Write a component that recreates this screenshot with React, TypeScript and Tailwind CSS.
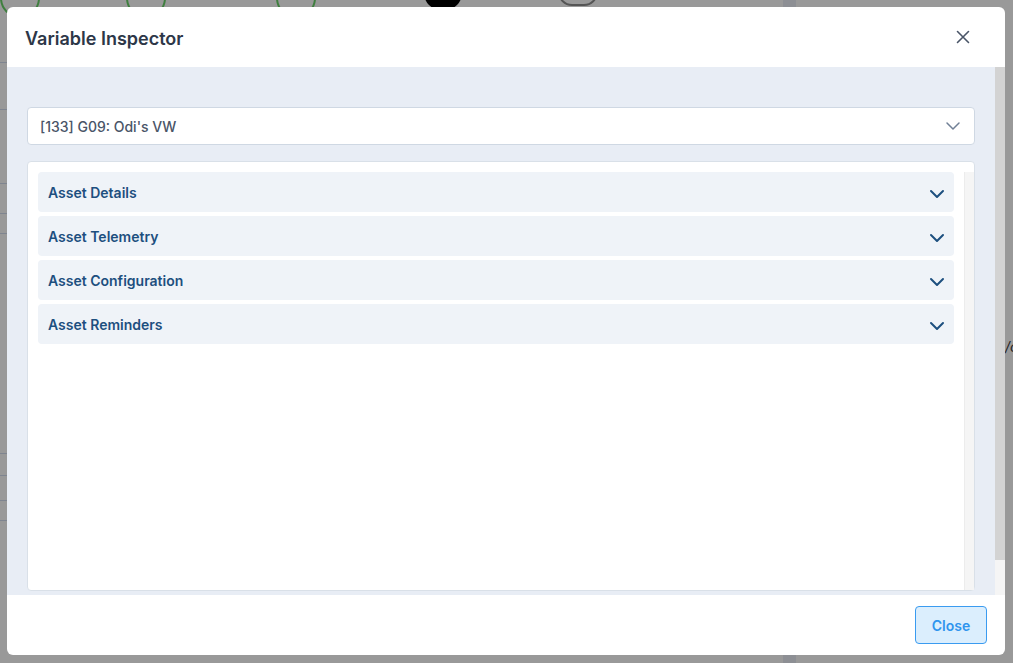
import { useState } from "react"

const sections = ["Asset Details", "Asset Telemetry", "Asset Configuration", "Asset Reminders"]

function Chevron({ className }: { className?: string }) {
  return (
    <svg viewBox="0 0 16 16" fill="none" stroke="currentColor" strokeLinecap="round" strokeLinejoin="round" className={className}>
      <path d="M2 5l6 6 6-6" />
    </svg>
  )
}

function App() {
  const [open, setOpen] = useState<string | null>(null)

  return (
    <div className="relative w-[1013px] h-[663px] overflow-hidden bg-[#999999] p-[7px] font-['Inter','Noto_Sans',sans-serif]">
      {/* page behind the overlay */}
      <div className="absolute left-[0px] top-[-22px] w-[40px] h-[40px] rounded-full border-2 border-[#3f7f3f]" />
      <div className="absolute left-[126px] top-[-22px] w-[40px] h-[40px] rounded-full border-2 border-[#3f7f3f]" />
      <div className="absolute left-[276px] top-[-22px] w-[40px] h-[40px] rounded-full border-2 border-[#3f7f3f]" />
      <div className="absolute left-[424px] top-[-24px] w-[38px] h-[34px] rounded-full bg-black" />
      <div className="absolute left-[558px] top-[-22px] w-[40px] h-[28px] rounded-full border-2 border-[#555]" />
      <div className="absolute left-[783px] top-0 w-[13px] h-[663px] bg-[#8d8f94]" />
      <div className="absolute left-0 top-[62px] w-[7px] border-t border-[#7f8590]" />
      <div className="absolute left-0 top-[109px] w-[7px] border-t border-[#7f8590]" />
      <div className="absolute left-0 top-[183px] w-[7px] border-t border-[#7f8590]" />
      <div className="absolute left-0 top-[213px] w-[7px] border-t border-[#7f8590]" />
      <div className="absolute left-0 top-[233px] w-[7px] border-t border-[#7f8590]" />
      <div className="absolute left-0 top-[453px] w-[7px] border-t border-[#7f8590]" />
      <div className="absolute left-0 top-[475px] w-[7px] border-t border-[#7f8590]" />
      <div className="absolute left-0 top-[500px] w-[7px] border-t border-[#7f8590]" />
      <div className="absolute left-0 top-[520px] w-[7px] border-t border-[#7f8590]" />
      <div className="absolute left-[1005px] top-[340px] text-[14px] italic text-[#222] leading-none">/c</div>

      <div className="relative flex flex-col w-[998px] h-[648px] bg-white rounded-md overflow-hidden">
        <header className="flex items-center justify-between h-[60px] pl-[18px] pr-[35px] shrink-0">
          <h2 className="text-[18px] font-semibold text-[#2d3748] pt-[2px]">Variable Inspector</h2>
          <button className="text-[#4a5568]">
            <svg viewBox="0 0 14 14" className="w-[14px] h-[14px]" fill="none" stroke="currentColor" strokeWidth="1.6" strokeLinecap="round">
              <path d="M1.5 1.5l11 11M12.5 1.5l-11 11" />
            </svg>
          </button>
        </header>

        <div className="flex flex-1 bg-[#e8edf5] min-h-0">
          <div className="flex-1 flex flex-col pl-[20px] pr-[20px] pt-[40px] pb-[4px] gap-[16px]">
            <div className="flex items-center justify-between h-[38px] bg-white border border-[#cfd8e3] rounded pl-[12px] pr-[13px]">
              <span className="text-[14px] font-medium text-[#4a5568]">[133] G09: Odi's VW</span>
              <Chevron className="w-[16px] h-[16px] text-[#718096] stroke-[1.5]" />
            </div>

            <div className="flex flex-1 bg-white border border-[#d9e0e8] rounded pl-[10px] pt-[10px]">
              <div className="flex-1 flex flex-col gap-[4px]">
                {sections.map((s) => (
                  <button
                    key={s}
                    onClick={() => setOpen(open === s ? null : s)}
                    className="flex items-center justify-between h-[40px] bg-[#eff3f8] rounded pl-[10px] pr-[9px] text-left"
                  >
                    <span className="text-[14px] font-semibold text-[#1d4f7f]">{s}</span>
                    <Chevron className="w-[16px] h-[16px] mt-[3px] text-[#1d4f7f] stroke-2" />
                  </button>
                ))}
              </div>
              <div className="w-[10px] ml-[10px] bg-[#f5f5f5] border-l border-[#ececec]" />
            </div>
          </div>
          <div className="w-[10px] flex flex-col bg-[#f5f5f5]">
            <div className="h-[493px] bg-[#d3d3d3]" />
          </div>
        </div>

        <footer className="flex items-center justify-end h-[60px] pr-[18px] shrink-0">
          <button className="w-[72px] h-[38px] rounded bg-[#dbeefd] border border-[#3a9bf0] text-[14px] font-semibold text-[#2f95ee]">
            Close
          </button>
        </footer>
      </div>
    </div>
  )
}

export default App
